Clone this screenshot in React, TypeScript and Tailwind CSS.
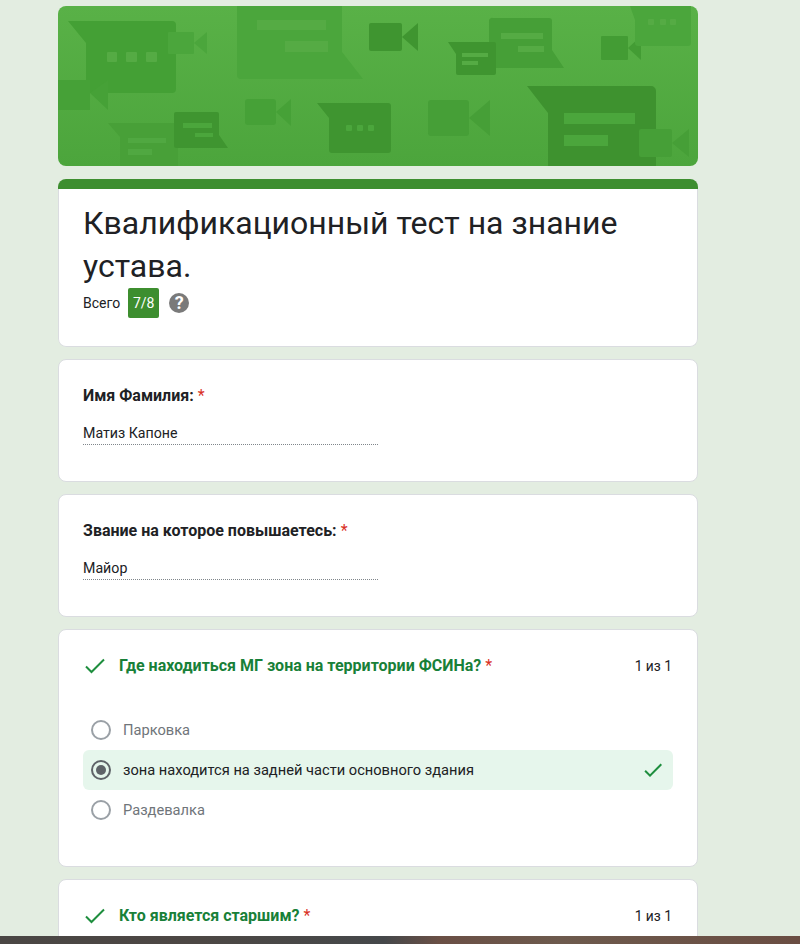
import React from "react";

function Banner() {
  const dark = "#3f9530";
  const mid = "#469f37";
  const soft = "#4ba63c";
  const bar = "#55ab44";
  return (
    <svg viewBox="58 6 640 160" className="block w-full h-full">
      <defs>
        <linearGradient id="bg" x1="0" y1="0" x2="0" y2="1">
          <stop offset="0" stopColor="#59b147" />
          <stop offset="1" stopColor="#4ca53c" />
        </linearGradient>
      </defs>
      <rect x="58" y="6" width="640" height="160" fill="url(#bg)" />
      {/* top-left dark chat */}
      <path d="M68 21H172a4 4 0 0 1 4 4V89a4 4 0 0 1-4 4H86V43Z" fill="#44a035" />
      <rect x="107" y="52" width="10" height="10" rx="1" fill={bar} />
      <rect x="126" y="52" width="11" height="10" rx="1" fill={bar} />
      <rect x="146" y="52" width="11" height="10" rx="1" fill={bar} />
      {/* camera over it */}
      <rect x="168" y="32" width="26" height="22" rx="1" fill={soft} />
      <path d="M194 43 207 32V54Z" fill={soft} />
      {/* left camera */}
      <path d="M58 80H90V110H58Z" fill="#46a137" />
      <path d="M90 93 108 80V110Z" fill="#46a137" />
      {/* large top chat */}
      <path d="M237 6H342V52L363 79H241a4 4 0 0 1-4-4Z" fill={soft} />
      <rect x="257" y="20" width="69" height="10" fill={bar} />
      <rect x="285" y="41" width="43" height="11" fill={bar} />
      {/* low-left chat */}
      <path d="M108 123H178V166H120V137Z" fill="#48a038" />
      <rect x="128" y="138" width="38" height="5" fill="#50a841" />
      <rect x="128" y="149" width="24" height="6" fill="#50a841" />
      {/* small dark chat */}
      <path d="M176 112H217a2 2 0 0 1 2 2V135L228 148H176a2 2 0 0 1-2-2V114a2 2 0 0 1 2-2Z" fill={dark} />
      <rect x="183" y="123" width="29" height="5" fill={soft} />
      <rect x="195" y="133" width="18" height="4" fill={soft} />
      {/* center camera */}
      <rect x="245" y="99" width="31" height="26" rx="3" fill="#46a137" />
      <path d="M276 112 291 99V126Z" fill="#46a137" />
      {/* center dark chat */}
      <path d="M317 103H388a3 3 0 0 1 3 3V150a3 3 0 0 1-3 3H332a3 3 0 0 1-3-3V118Z" fill={dark} />
      <rect x="346" y="125" width="6" height="6" rx="1" fill={soft} />
      <rect x="357" y="125" width="6" height="6" rx="1" fill={soft} />
      <rect x="368" y="125" width="6" height="6" rx="1" fill={soft} />
      {/* top center camera */}
      <rect x="369" y="23" width="33" height="28" rx="2" fill={dark} />
      <path d="M402 37 418 23V51Z" fill={dark} />
      {/* chat top middle */}
      <path d="M493 18H549a3 3 0 0 1 3 3V50L564 68H489V21a3 3 0 0 1 4-3Z" fill={mid} />
      <rect x="501" y="33" width="42" height="6" fill={bar} />
      <rect x="518" y="46" width="26" height="6" fill={bar} />
      {/* small dark chat middle */}
      <path d="M448 42H494a2 2 0 0 1 2 2V73a2 2 0 0 1-2 2H458a2 2 0 0 1-2-2V54Z" fill={dark} />
      <rect x="462" y="53" width="26" height="4" fill={bar} />
      <rect x="462" y="61" width="16" height="4" fill={bar} />
      {/* right camera */}
      <rect x="601" y="36" width="27" height="24" rx="1" fill="#439c34" />
      <path d="M628 48 641 36V60Z" fill="#439c34" />
      {/* top-right chat */}
      <path d="M630 6H691V43a3 3 0 0 1-3 3H638a3 3 0 0 1-3-3V20Z" fill={soft} />
      <rect x="648" y="19" width="6" height="6" rx="1" fill={bar} />
      <rect x="660" y="19" width="6" height="6" rx="1" fill={bar} />
      <rect x="670" y="19" width="6" height="6" rx="1" fill={bar} />
      {/* mid camera */}
      <rect x="428" y="100" width="41" height="36" rx="3" fill={mid} />
      <path d="M469 118 490 100V136Z" fill={mid} />
      {/* big dark chat */}
      <path d="M527 86H651a5 5 0 0 1 5 5V166H548V113Z" fill="#3e922f" />
      <rect x="564" y="113" width="71" height="11" fill={soft} />
      <rect x="564" y="135" width="44" height="11" fill={soft} />
      {/* bottom right camera */}
      <rect x="639" y="129" width="33" height="28" rx="2" fill={mid} />
      <path d="M672 143 689 129V157Z" fill={mid} />
    </svg>
  );
}

function TextCard({ label, value }: { label: string; value: string }) {
  return (
    <section className="h-[123px] rounded-lg bg-white border border-[#dadce0] pl-6 pt-[25px]">
      <h2 className="text-[16px] leading-[22px] font-bold text-[#202124]">
        {label} <span className="text-[#d93025] font-normal">*</span>
      </h2>
      <div className="mt-[14px] w-[295px] h-[24px] pt-[1px] border-b border-dotted border-[#80868b] text-[14.2px] leading-[22px] text-[#202124]">
        {value}
      </div>
    </section>
  );
}

function Radio({ selected }: { selected?: boolean }) {
  return (
    <span className={`flex items-center justify-center w-5 h-5 rounded-full border-2 shrink-0 ${selected ? "border-[#5f6368]" : "border-[#9aa0a6]"}`}>
      {selected && <span className="block w-[10px] h-[10px] rounded-full bg-[#5f6368]" />}
    </span>
  );
}

function QuestionHead({ title }: { title: string }) {
  return (
    <div className="flex items-center h-[24px] pl-6 pr-[25px]">
      <svg viewBox="0 0 20 16" className="w-5 h-4 ml-[2px] shrink-0" fill="none" stroke="#1e8e3e" strokeWidth="2">
        <path d="M1 8.5 6.5 14 19 1.5" />
      </svg>
      <h2 className="ml-[14px] text-[16px] leading-[22px] font-bold text-[#188038]">
        {title} <span className="text-[#d93025] font-normal">*</span>
      </h2>
      <span className="ml-auto text-[13.8px] text-[#202124]">1 из 1</span>
    </div>
  );
}

export default function App() {
  return (
    <div className="relative h-[944px] overflow-hidden bg-[#e3ede1] font-['Roboto',sans-serif]">
      <main className="ml-[58px] w-[640px] pt-[6px] flex flex-col gap-[12px]">
        <div className="h-[160px] mb-px rounded-lg overflow-hidden">
          <Banner />
        </div>

        <section className="h-[168px] rounded-lg overflow-hidden flex flex-col">
          <div className="h-[10px] shrink-0 bg-[#3d8e2f]" />
          <div className="flex-1 bg-white border-x border-b border-[#dadce0] rounded-b-lg pl-6 pr-6 pt-[13px]">
            <h1 className="text-[32px] leading-[43px] font-normal text-[#202124]">
              Квалификационный тест на знание устава.
            </h1>
            <div className="flex items-center text-[14px] text-[#202124]">
              <span>Всего</span>
              <span className="ml-2 flex items-center justify-center w-[31px] h-[30px] rounded-[2px] bg-[#3d8e2f] text-white text-[14px]">7/8</span>
              <span className="ml-[10px] flex items-center justify-center w-5 h-5 rounded-full bg-[#7a7a7a] text-white text-[18px] font-bold leading-none">?</span>
            </div>
          </div>
        </section>

        <TextCard label="Имя Фамилия:" value="Матиз Капоне" />
        <TextCard label="Звание на которое повышаетесь:" value="Майор" />

        <section className="h-[238px] rounded-lg bg-white border border-[#dadce0] pt-[24px]">
          <QuestionHead title="Где находиться МГ зона на территории ФСИНа?" />
          <div className="mt-[32px] mx-6 flex flex-col">
            <div className="flex items-center h-[40px] pl-2 rounded-md">
              <Radio />
              <span className="ml-3 text-[14.67px] text-[#70757a]">Парковка</span>
            </div>
            <div className="flex items-center h-[40px] pl-2 pr-[8px] rounded-md bg-[#e6f6ec]">
              <Radio selected />
              <span className="ml-3 text-[14.67px] text-[#202124]">зона находится на задней части основного здания</span>
              <svg viewBox="0 0 24 24" className="ml-auto w-[24px] h-[24px]" fill="#1e8e3e">
                <path d="M9 16.17 4.83 12l-1.42 1.41L9 19 21 7l-1.41-1.41z" />
              </svg>
            </div>
            <div className="flex items-center h-[40px] pl-2 rounded-md">
              <Radio />
              <span className="ml-3 text-[14.67px] text-[#70757a]">Раздевалка</span>
            </div>
          </div>
        </section>

        <section className="h-[120px] rounded-lg bg-white border border-[#dadce0] pt-[24px]">
          <QuestionHead title="Кто является старшим?" />
        </section>
      </main>

      <div className="absolute inset-x-0 bottom-0 h-[8px] bg-[linear-gradient(90deg,#4a4644_0%,#4c4744_25%,#45484a_48%,#6a4f45_55%,#6d5a4d_70%,#6a4d42_100%)]" />
    </div>
  );
}
